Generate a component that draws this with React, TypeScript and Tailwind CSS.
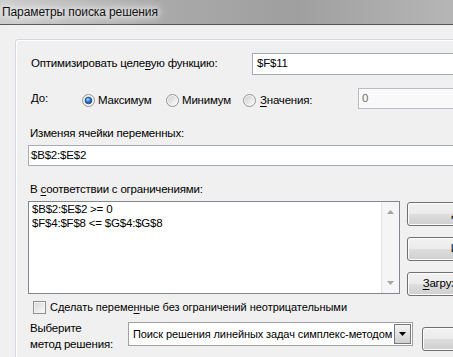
import React from 'react';

// Переключатель в стиле Windows 7
function Radio({ checked }: { checked?: boolean }) {
  return (
    <svg width="13" height="13" viewBox="0 0 13 13" className="shrink-0">
      <defs>
        <linearGradient id="rb" x1="0" y1="0" x2="1" y2="1">
          <stop offset="0" stopColor="#cfcfcf" />
          <stop offset="1" stopColor="#fdfdfd" />
        </linearGradient>
        <radialGradient id="rdot" cx="0.4" cy="0.35" r="0.75">
          <stop offset="0" stopColor="#b5e0ff" />
          <stop offset="0.45" stopColor="#2c7fd8" />
          <stop offset="1" stopColor="#0a3a75" />
        </radialGradient>
      </defs>
      <circle cx="6.5" cy="6.5" r="6" fill="#f6f6f6" stroke="#929292" />
      <circle cx="6.5" cy="6.5" r="4.6" fill="url(#rb)" />
      {checked && <circle cx="6.5" cy="6.5" r="3.3" fill="url(#rdot)" stroke="#17457f" strokeWidth="0.8" />}
    </svg>
  );
}

function Button({ children, className = '' }: { children?: React.ReactNode; className?: string }) {
  return (
    <div
      className={`w-[138px] h-[24px] shrink-0 rounded-[3px] border border-[#707070] shadow-[inset_0_0_0_1px_#fcfcfc] bg-[linear-gradient(#f2f2f2_0%,#ebebeb_48%,#dddddd_52%,#cfcfcf_100%)] flex items-center justify-center whitespace-nowrap ${className}`}
    >
      {children}
    </div>
  );
}

export default function App() {
  return (
    <div className="w-[453px] h-[357px] overflow-hidden bg-[#f0f0f0] text-[11.5px] tracking-[-0.2px] text-black font-['Liberation_Sans',Arial,sans-serif]">
      {/* ЗАГОЛОВОК ОКНА */}
      <div className="h-[25px] border-b border-[#555555] bg-[linear-gradient(90deg,#cdcdcd_0%,#aaaaaa_35%,#9f9f9f_65%,#b6b6b6_100%)] flex items-center pl-[2px]">
        <span className="text-[12px] tracking-[-0.1px] text-[#111] [text-shadow:0_0_6px_#ffffff,0_0_10px_#ffffff,0_0_14px_#ffffff]">
          Параметры поиска решения
        </span>
      </div>

      {/* ОСНОВНАЯ ПАНЕЛЬ */}
      <div className="pt-[14px] pl-[15px]">
        <div className="w-[600px] h-[340px] rounded-[3px] border border-[#d3d9de] shadow-[inset_1px_1px_0_#ffffff] pl-[12px] pt-[13px]">
          {/* Целевая функция */}
          <div className="flex items-center h-[22px]">
            <div className="w-[221px] ml-[3px] whitespace-nowrap">
              Оптимизировать целе<span className="underline underline-offset-[2px]">в</span>ую функцию:
            </div>
            <div className="w-[300px] h-[22px] bg-white border border-[#a5acb5] flex items-center pl-[4px]">$F$11</div>
          </div>

          {/* До */}
          <div className="flex items-center h-[21px] mt-[13px]">
            <div className="w-[51px] ml-[3px]">До:</div>
            <div className="w-[84px] flex items-center gap-[3px] pt-[4px]">
              <Radio checked />
              <span>Максимум</span>
            </div>
            <div className="w-[77px] flex items-center gap-[3px] pt-[4px]">
              <Radio />
              <span>Минимум</span>
            </div>
            <div className="w-[115px] flex items-center gap-[4px] pt-[4px]">
              <Radio />
              <span>
                <span className="underline underline-offset-[2px]">З</span>начения:
              </span>
            </div>
            <div className="w-[200px] h-[21px] bg-[#f9f9f9] border border-[#b9bdc3] flex items-center pl-[3px] text-[#6d6d6d]">
              0
            </div>
          </div>

          {/* Изменяемые ячейки */}
          <div className="mt-[17px] ml-[2px] leading-[15px]">Изменяя ячейки переменных:</div>
          <div className="mt-[4px] w-[560px] h-[21px] bg-white border border-[#a5acb5] flex items-center pl-[2px]">
            $B$2:$E$2
          </div>

          {/* Ограничения */}
          <div className="mt-[16px] ml-[2px] leading-[15px]">
            В <span className="underline underline-offset-[2px]">с</span>оответствии с ограничениями:
          </div>
          <div className="mt-[4px] flex items-start gap-[7px]">
            <div className="w-[372px] h-[93px] bg-white border border-[#828790] flex">
              <div className="flex-1 pl-[3px] leading-[14px]">
                <div>{'$B$2:$E$2 >= 0'}</div>
                <div>{'$F$4:$F$8 <= $G$4:$G$8'}</div>
              </div>
              <div className="w-[18px] h-full border-l border-[#e3e3e3] bg-[#f5f5f5] flex flex-col items-center justify-between py-[8px]">
                <svg width="7" height="4" viewBox="0 0 7 4">
                  <polygon points="0,4 3.5,0 7,4" fill="#a3a3a3" />
                </svg>
                <svg width="7" height="4" viewBox="0 0 7 4">
                  <polygon points="0,0 7,0 3.5,4" fill="#a3a3a3" />
                </svg>
              </div>
            </div>
            <div className="mt-[1px] flex flex-col gap-[11px]">
              <Button>Добавить</Button>
              <Button>Изменить</Button>
              <Button>
                <span>
                  <span className="underline underline-offset-[2px]">З</span>агрузить/сохранить
                </span>
              </Button>
            </div>
          </div>

          {/* Неотрицательность */}
          <div className="mt-[4px] h-[15px] flex items-center ml-[5px] gap-[4px]">
            <div className="w-[13px] h-[13px] border border-[#8f8f8f] shadow-[inset_0_0_0_1px_#f4f4f4] bg-[linear-gradient(135deg,#d6d6d6,#fbfbfb)]" />
            <span className="whitespace-nowrap text-[11px] tracking-[-0.05px]">
              Сделать переме<span className="underline underline-offset-[2px]">н</span>ные без ограничений неотрицательными
            </span>
          </div>

          {/* Метод решения */}
          <div className="mt-[5px] flex items-start">
            <div className="w-[98px] ml-[2px] leading-[16px]">
              <div>Выберите</div>
              <div>метод решения:</div>
            </div>
            <div className="mt-[2px] w-[285px] h-[24px] bg-white border border-[#a0a0a0] flex items-center pl-[4px] pr-[1px]">
              <span className="flex-1 whitespace-nowrap overflow-hidden text-[11px] tracking-[-0.1px]">
                Поиск решения линейных задач симплекс-методом
              </span>
              <div className="w-[17px] h-[20px] border border-[#7a7a7a] bg-[linear-gradient(#f4f4f4,#d0d0d0)] flex items-center justify-center">
                <svg width="7" height="4" viewBox="0 0 7 4">
                  <polygon points="0,0 7,0 3.5,4" fill="#000" />
                </svg>
              </div>
            </div>
            <Button className="ml-[9px] mt-[7px]" />
          </div>
        </div>
      </div>
    </div>
  );
}
